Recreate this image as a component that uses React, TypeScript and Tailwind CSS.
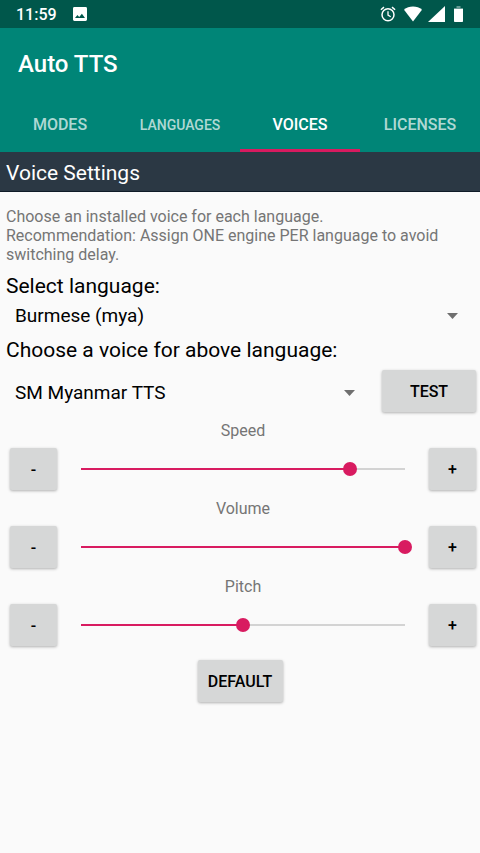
import { useState, type ReactNode } from "react";

const tabs = ["MODES", "LANGUAGES", "VOICES", "LICENSES"];

function StatusBar() {
  return (
    <div className="flex h-7 items-center bg-[#00574b] pr-[17px] pl-4 text-white">
      <span className="pt-px text-base leading-7 font-medium">11:59</span>
      <svg className="ml-4 size-[14px]" viewBox="0 0 14 14" aria-hidden="true">
        <path
          fill="currentColor"
          fillRule="evenodd"
          d="M1.4 0h11.2A1.4 1.4 0 0 1 14 1.4v11.2a1.4 1.4 0 0 1-1.4 1.4H1.4A1.4 1.4 0 0 1 0 12.6V1.4A1.4 1.4 0 0 1 1.4 0ZM2 11h10L8.9 6.7 6.2 10 4.4 7.9Z"
        />
      </svg>
      <div className="ml-auto flex items-center">
        <svg className="h-4 w-4" viewBox="0 0 16 16" fill="none" stroke="currentColor" aria-hidden="true">
          <circle cx="8" cy="8.8" r="6" strokeWidth="1.5" />
          <path d="M8 5.2v3.9l2.7 1.7" strokeWidth="1.3" />
          <path d="M.9 3.7 4 1.1M15.1 3.7 12 1.1" strokeWidth="1.5" />
        </svg>
        <svg className="ml-2 h-4 w-[18px]" viewBox="0 0 18 16" fill="currentColor" aria-hidden="true">
          <path d="M9 15.4 0 3.7C2.4 1.5 5.6.4 9 .4s6.600 1.100 9 3.300Z" />
        </svg>
        <svg className="ml-[6px] h-4 w-[17px]" viewBox="0 0 17 16" fill="currentColor" aria-hidden="true">
          <path d="M0 16 17 0v16Z" />
        </svg>
        <svg className="ml-[9px] h-4 w-[9px]" viewBox="0 0 9 16" fill="currentColor" aria-hidden="true">
          <path d="M2.500 0h4v2H9v1H0V2h2.500Z" opacity=".4" />
          <path d="M0 3h9v12.200a.8.8 0 0 1-.8.8H.8a.8.8 0 0 1-.8-.8Z" />
        </svg>
      </div>
    </div>
  );
}

function PushButton({ className, label, children, onClick }: { className: string; label?: string; children: ReactNode; onClick?: () => void }) {
  return (
    <button
      type="button"
      aria-label={label}
      onClick={onClick}
      className={
        "h-[42px] shrink-0 rounded-[2px] bg-[#d6d7d7] pt-[2px] text-base font-medium text-black shadow-[0_1px_3px_rgba(0,0,0,0.3)] " + className
      }
    >
      {children}
    </button>
  );
}

function Spinner({ id, value }: { id: string; value: string }) {
  return (
    <div className="relative min-w-0 flex-1">
      <select id={id} defaultValue={value} className="h-7 w-full appearance-none bg-transparent pr-9 pl-[9px] text-[19px] text-black">
        <option>{value}</option>
      </select>
      <svg className="pointer-events-none absolute top-[11px] right-[13px] h-[6px] w-[11px] text-[#6f6f6f]" viewBox="0 0 11 6" fill="currentColor" aria-hidden="true">
        <path d="M0 0h11L5.500 6Z" />
      </svg>
    </div>
  );
}

function SliderSetting({ id, name, initial }: { id: string; name: string; initial: number }) {
  const [value, setValue] = useState(initial);
  return (
    <div className="pr-1 pl-[10px]">
      <label htmlFor={id} className="block h-9 pt-px text-center text-base leading-9 text-[#757575]">
        {name}
      </label>
      <div className="flex h-[42px] items-center">
        <PushButton className="w-[47px]" label={name + " down"} onClick={() => setValue(Math.max(0, value - 1))}>
          -
        </PushButton>
        <input
          id={id}
          type="range"
          min={0}
          max={100}
          value={value}
          onChange={(e) => setValue(Number(e.target.value))}
          style={{ backgroundImage: `linear-gradient(to right, #d81b60 ${value}%, #d3d3d3 ${value}%)` }}
          className="mx-[17px] h-[14px] min-w-0 flex-1 appearance-none bg-transparent bg-[length:calc(100%-14px)_2px] bg-center bg-no-repeat [&::-webkit-slider-thumb]:size-[14px] [&::-webkit-slider-thumb]:appearance-none [&::-webkit-slider-thumb]:rounded-full [&::-webkit-slider-thumb]:bg-[#d81b60]"
        />
        <PushButton className="w-[47px]" label={name + " up"} onClick={() => setValue(Math.min(100, value + 1))}>
          +
        </PushButton>
      </div>
    </div>
  );
}

export default function App() {
  return (
    <div className="min-h-screen bg-[#fafafa] font-['Roboto',sans-serif]">
      <StatusBar />
      <header className="bg-[#008577] text-white">
        <h1 className="h-[70px] pl-[18px] text-[24px] leading-[72px] font-medium">Auto TTS</h1>
        <nav className="grid h-[54px] grid-cols-4">
          {tabs.map((tab) => (
            <button
              key={tab}
              type="button"
              className={
                "border-b-[3px] pt-[3px] font-medium " +
                (tab === "VOICES" ? "border-[#d81b60] text-white " : "border-transparent text-white/70 ") +
                (tab === "LANGUAGES" ? "text-sm" : "text-base")
              }
            >
              {tab}
            </button>
          ))}
        </nav>
      </header>
      <main>
        <h2 className="h-10 border-b border-[#0f1b27] bg-[#2b3844] pl-[6px] text-[21px] leading-[43px] text-white">Voice Settings</h2>
        <p className="mt-[15px] px-[6px] text-base leading-[19px] text-[#757575]">
          Choose an installed voice for each language.
          <br />
          Recommendation: Assign ONE engine PER language to avoid switching delay.
        </p>
        <label htmlFor="language" className="mt-2 block px-[6px] text-[21px] leading-7 text-black">
          Select language:
        </label>
        <div className="mt-[2px] flex pr-[9px] pl-[6px]">
          <Spinner id="language" value="Burmese (mya)" />
        </div>
        <label htmlFor="voice" className="mt-[6px] block px-[6px] text-[21px] leading-7 text-black">
          Choose a voice for above language:
        </label>
        <div className="mt-[6px] flex items-start pr-1 pl-[6px]">
          <div className="flex min-w-0 flex-1 pt-[9px]">
            <Spinner id="voice" value="SM Myanmar TTS" />
          </div>
          <PushButton className="ml-[14px] w-[94px]">TEST</PushButton>
        </div>
        <SliderSetting id="speed" name="Speed" initial={83} />
        <SliderSetting id="volume" name="Volume" initial={100} />
        <SliderSetting id="pitch" name="Pitch" initial={50} />
        <div className="mt-[14px] flex justify-center">
          <PushButton className="w-[85px]">DEFAULT</PushButton>
        </div>
      </main>
    </div>
  );
}
